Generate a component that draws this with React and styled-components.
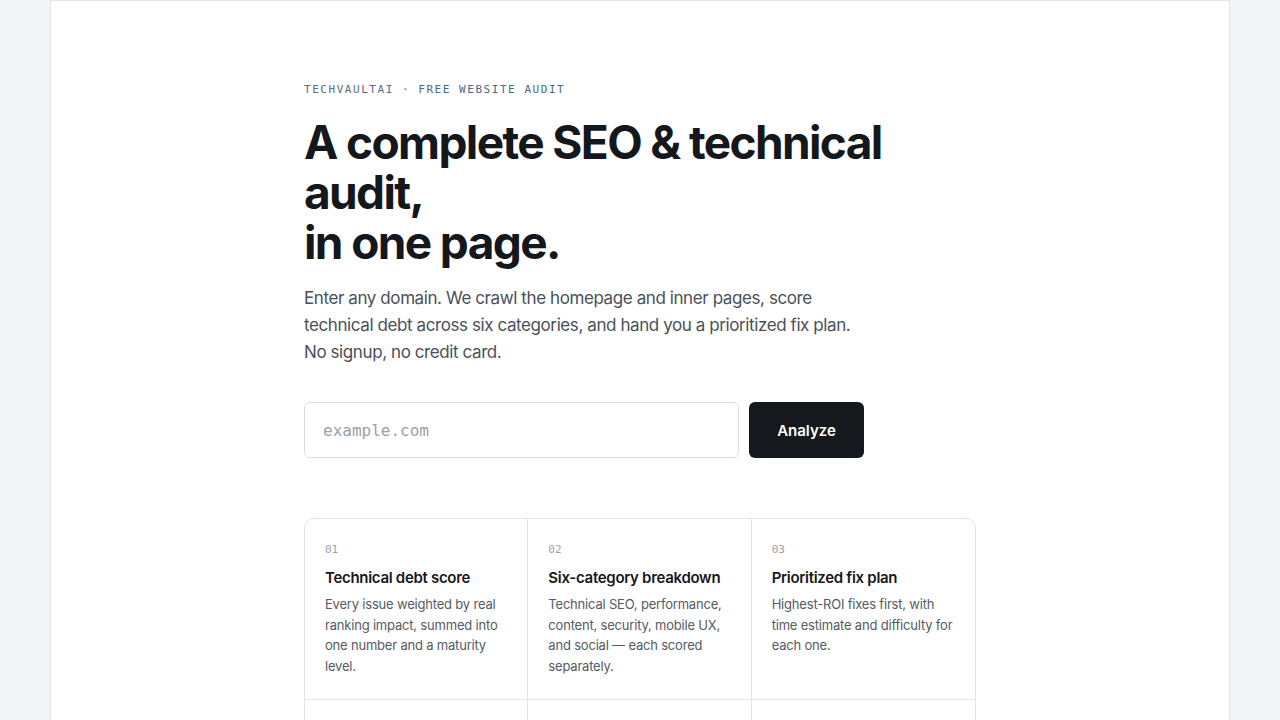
import React from "react";
import styled, { createGlobalStyle } from "styled-components";

const Global = createGlobalStyle`
  * { box-sizing: border-box; }
  html, body { margin: 0; padding: 0; }
  body {
    background: #f4f5f7;
    font-family: Inter, "Noto Sans", sans-serif;
    color: #15181d;
    -webkit-font-smoothing: antialiased;
  }
`;

const Page = styled.div`
  width: 1180px;
  margin: 0 auto;
  min-height: 100vh;
  background: #ffffff;
  border: 1px solid #e1e3e7;
  padding: 81px 0 80px;
`;

const Main = styled.main`
  width: 672px;
  margin: 0 auto;
`;

const Eyebrow = styled.div`
  font-family: "DejaVu Sans Mono", "Liberation Mono", monospace;
  font-size: 11px;
  line-height: 16px;
  letter-spacing: 0.14em;
  text-transform: uppercase;
  color: #5d6d7e;
`;

const EyebrowAccent = styled.span`
  color: #47698d;
`;

const Title = styled.h1`
  margin: 19px 0 0;
  font-size: 46px;
  line-height: 50px;
  font-weight: 700;
  letter-spacing: -0.035em;
  color: #14171c;
`;

const Lead = styled.p`
  margin: 18px 0 0;
  max-width: 560px;
  font-size: 17px;
  line-height: 27px;
  letter-spacing: -0.024em;
  color: #4a505a;
`;

const Form = styled.form`
  margin-top: 36px;
  display: flex;
  gap: 10px;
  width: 560px;
`;

const Input = styled.input`
  flex: 1;
  height: 56px;
  border: 1px solid #d9dce1;
  border-radius: 6px;
  padding: 0 18px;
  font-family: "DejaVu Sans Mono", "Liberation Mono", monospace;
  font-size: 16px;
  color: #15181d;
  outline: none;
  &::placeholder { color: #9a9fa7; }
`;

const Button = styled.button`
  width: 115px;
  height: 56px;
  border: none;
  border-radius: 6px;
  background: #15181d;
  color: #ffffff;
  font-family: Inter, "Noto Sans", sans-serif;
  font-size: 15px;
  font-weight: 600;
  cursor: pointer;
`;

const Grid = styled.section`
  margin-top: 60px;
  display: grid;
  grid-template-columns: repeat(3, 1fr);
  border: 1px solid #e2e4e8;
  border-radius: 10px;
  overflow: hidden;
`;

const Cell = styled.div`
  padding: 24px 20px 23px;
  border-right: ${(p) => (p.$lastCol ? "none" : "1px solid #e2e4e8")};
  border-bottom: ${(p) => (p.$lastRow ? "none" : "1px solid #e2e4e8")};
`;

const Num = styled.div`
  font-family: "DejaVu Sans Mono", "Liberation Mono", monospace;
  font-size: 11px;
  line-height: 14px;
  color: #9ca1a8;
`;

const CellTitle = styled.h3`
  margin: 11px 0 0;
  font-size: 15px;
  line-height: 20px;
  font-weight: 600;
  letter-spacing: -0.02em;
  color: #15181d;
`;

const CellText = styled.p`
  margin: 6px 0 0;
  font-size: 13px;
  line-height: 20.5px;
  letter-spacing: -0.015em;
  color: #555b64;
`;

const features = [
  {
    n: "01",
    t: "Technical debt score",
    d: "Every issue weighted by real ranking impact, summed into one number and a maturity level.",
  },
  {
    n: "02",
    t: "Six-category breakdown",
    d: "Technical SEO, performance, content, security, mobile UX, and social — each scored separately.",
  },
  {
    n: "03",
    t: "Prioritized fix plan",
    d: "Highest-ROI fixes first, with time estimate and difficulty for each one.",
  },
  {
    n: "04",
    t: "Inner-page crawl",
    d: "We follow internal links and check the pages that matter, not just the homepage.",
  },
  {
    n: "05",
    t: "Core Web Vitals",
    d: "Load time, layout shift and interactivity measured the way Google sees them.",
  },
  {
    n: "06",
    t: "Shareable report",
    d: "One link for your team or client, with every finding explained in plain language.",
  },
];

export default function App() {
  return (
    <>
      <Global />
      <Page>
        <Main>
          <Eyebrow>
            TechVaultAI · <EyebrowAccent>Free website audit</EyebrowAccent>
          </Eyebrow>
          <Title>
            A complete SEO &amp; technical audit,
            <br />
            in one page.
          </Title>
          <Lead>
            Enter any domain. We crawl the homepage and inner pages, score
            technical debt across six categories, and hand you a prioritized
            fix plan. No signup, no credit card.
          </Lead>
          <Form onSubmit={(e) => e.preventDefault()}>
            <Input type="text" placeholder="example.com" />
            <Button type="submit">Analyze</Button>
          </Form>
          <Grid>
            {features.map((f, i) => (
              <Cell key={f.n} $lastCol={i % 3 === 2} $lastRow={i >= 3}>
                <Num>{f.n}</Num>
                <CellTitle>{f.t}</CellTitle>
                <CellText>{f.d}</CellText>
              </Cell>
            ))}
          </Grid>
        </Main>
      </Page>
    </>
  );
}
